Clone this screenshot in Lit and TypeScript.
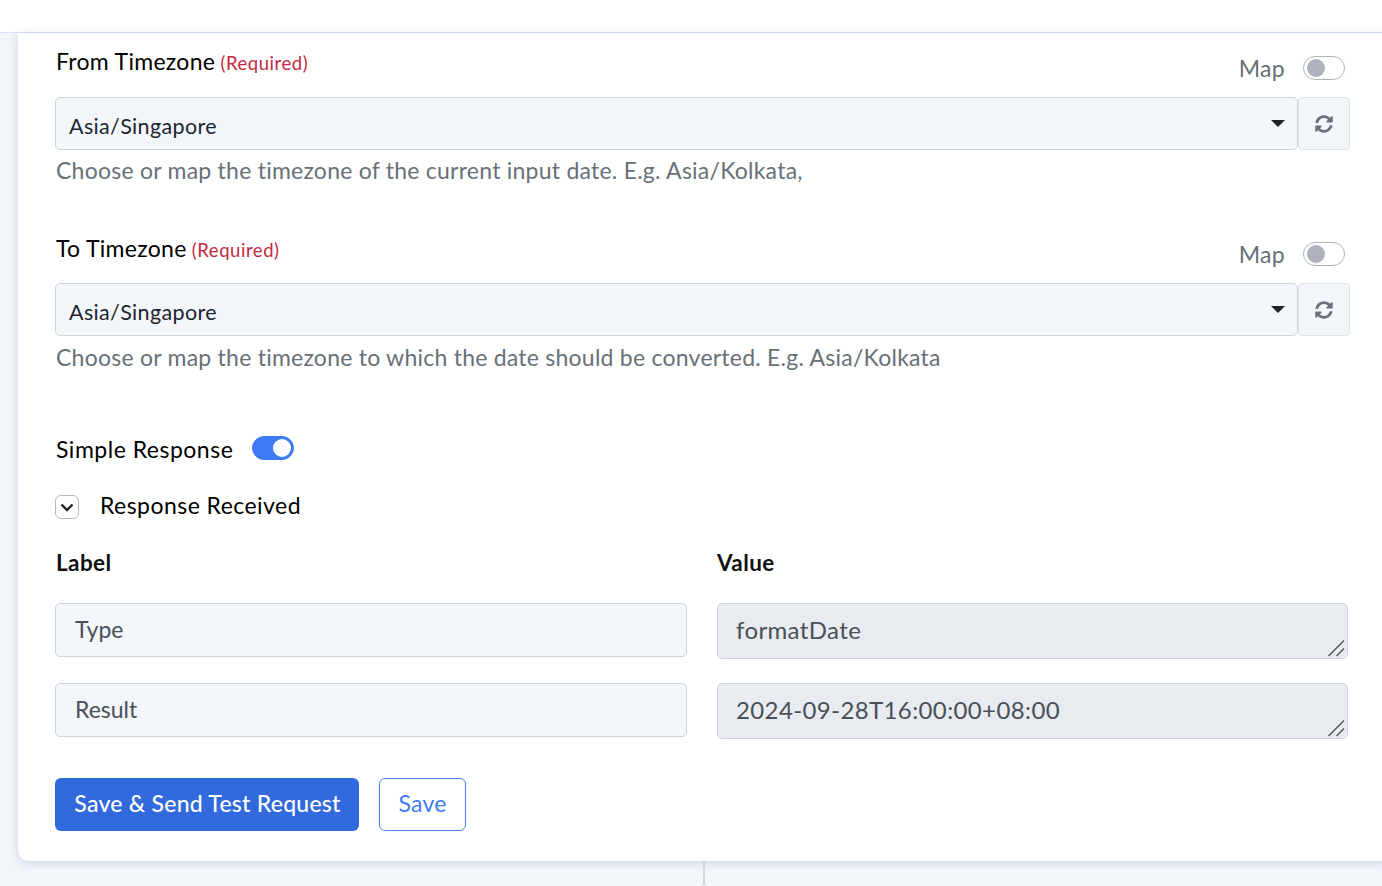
import { LitElement, html, css } from "lit";
import { customElement } from "lit/decorators.js";

const sync = html`<svg class="sync" viewBox="0 0 512 512" width="18" height="18"><path fill="currentColor" d="M370.7 133.3C339.5 104 298.9 88 255.8 88c-77.5.1-144.3 53.2-162.8 126.9-1.3 5.4-6.1 9.2-11.7 9.2H24.1c-7.5 0-13.2-6.8-11.8-14.2C33.9 94.9 134.8 8 256 8c66.4 0 126.8 26.1 171.3 68.7L463 41c15.1-15.1 41-4.4 41 17v134c0 13.3-10.7 24-24 24H346c-21.4 0-32.1-25.9-17-41l41.7-41.7zM32 296h134c21.4 0 32.1 25.9 17 41l-41.8 41.8c31.3 29.3 71.8 45.3 114.9 45.2 77.4-.1 144.3-53.1 162.8-126.8 1.3-5.4 6.1-9.2 11.7-9.2h57.3c7.5 0 13.2 6.8 11.8 14.2C478.1 417.1 377.2 504 256 504c-66.4 0-126.8-26.1-171.3-68.7L49 471c-15.1 15.1-41 4.4-41-17V320c0-13.3 10.7-24 24-24z"/></svg>`;

@customElement("app-root")
export class AppRoot extends LitElement {
  static styles = css`
    :host { display: block; height: 886px; overflow: hidden; background: #f3f6fa; font-family: Lato, "Open Sans", sans-serif; color: #000; }
    .top { height: 32px; background: #fff; border-bottom: 1px solid #d8e2fb; }
    .card { margin: 0 -12px 0 18px; height: 828px; box-sizing: border-box; padding: 0 44px 0 37px; background: #fff; border-radius: 0 0 10px 10px; box-shadow: 0 2px 10px rgba(60, 80, 140, .22); display: flex; flex-direction: column; }
    .lab-row { display: flex; justify-content: space-between; height: 64px; flex: none; }
    .lab { font-size: 23px; line-height: 28px; margin-top: 14px; padding-left: 1px; letter-spacing: .3px; }
    .req { font-size: 18.5px; color: #c3283f; margin-left: -1px; letter-spacing: .55px; }
    .map { display: flex; align-items: flex-start; gap: 18px; color: #687078; font-size: 23px; padding-top: 23px; line-height: 24px; margin-right: 5px; letter-spacing: .3px; }
    .tog { display: block; box-sizing: border-box; width: 42px; height: 24px; border-radius: 12px; border: 1px solid #aeb3bd; background: #fff; position: relative; }
    .tog::after { content: ""; position: absolute; left: 3px; top: 2px; width: 18px; height: 18px; border-radius: 50%; background: #adb2bd; }
    .tog.on { background: #3d7bf7; border-color: #3d7bf7; margin-top: -2px; }
    .tog.on::after { left: 20px; background: #fff; }
    .sel-row { display: flex; height: 53px; flex: none; }
    .sel { flex: none; width: 1243px; box-sizing: border-box; display: flex; align-items: center; justify-content: space-between; padding: 5px 12px 0 13px; background: #f3f6fa; border: 1px solid #cfd3da; border-radius: 5px; font-size: 21.5px; color: #1d2530; letter-spacing: .35px; }
    .caret { width: 0; height: 0; margin-top: -5px; border-left: 7px solid transparent; border-right: 7px solid transparent; border-top: 7px solid #1f2329; }
    .ref { flex: none; width: 52px; box-sizing: border-box; display: flex; align-items: center; justify-content: center; background: #f3f6fa; border: 1px solid #dfe3e9; border-radius: 4px; color: #687078; margin-left: 0; }
    .sync { display: block; }
    .hint { font-size: 23px; line-height: 30px; color: #687078; margin-top: 5px; padding-left: 1px; height: 30px; flex: none; white-space: nowrap; letter-spacing: .24px; }
    .field { display: flex; flex-direction: column; flex: none; height: 186px; }
    .field.second { height: 211px; }
    .field.second .lab { margin-top: 15px; }
    .field.second .hint { margin-top: 6px; }
    .simple { display: flex; align-items: center; gap: 19px; height: 34px; padding: 2px 0 0 1px; flex: none; font-size: 23px; letter-spacing: .5px; }
    .resp { display: flex; align-items: center; gap: 21px; height: 36px; margin-top: 21px; flex: none; font-size: 23px; letter-spacing: .45px; }
    .chev { box-sizing: border-box; width: 24px; height: 24px; border: 1px solid #b4b9c4; border-radius: 6px; display: flex; align-items: center; justify-content: center; margin-top: 4px; }
    .grid { display: grid; grid-template-columns: 632px 631px; column-gap: 30px; margin-top: 24px; flex: none; }
    .h { font-size: 22.5px; font-weight: 700; line-height: 32px; height: 56px; color: #111; letter-spacing: .4px; }
    .rows:first-child .h { padding-left: 1px; }
    .rows { display: flex; flex-direction: column; }
    .in { box-sizing: border-box; height: 54px; margin-top: 0; background: #f3f6fa; border: 1px solid #cfd3da; border-radius: 5px; padding: 0 19px 2px; display: flex; align-items: center; font-size: 23px; color: #495057; }
    .ta { box-sizing: border-box; height: 56px; background: #e8ebef; border: 1px solid #cfd3da; border-radius: 5px; padding: 0 18px 4px; display: flex; align-items: center; font-size: 24px; letter-spacing: .38px; color: #495057; position: relative; }
    .grip { position: absolute; right: 1px; bottom: 1px; display: block; }
    .sp26 { height: 26px; }
    .sp24 { height: 24px; }
    .btns { display: flex; gap: 20px; margin-top: 39px; flex: none; }
    .b { box-sizing: border-box; height: 53px; border-radius: 6px; display: flex; align-items: center; justify-content: center; font-size: 23px; letter-spacing: .25px; padding-bottom: 3px; }
    .pri { width: 304px; background: #3269dc; color: #fff; font-weight: 500; padding-left: 1px; }
    .sec { width: 87px; background: #fff; border: 1px solid #4a84f5; color: #3d7bf7; }
    .rule { width: 2px; height: 24px; margin-left: 703px; background: #cfd3da; }
  `;

  field(title: string, hint: string, cls: string) {
    return html`
      <div class="field ${cls}">
        <div class="lab-row">
          <div class="lab">${title} <span class="req">(Required)</span></div>
          <div class="map">Map <span class="tog"></span></div>
        </div>
        <div class="sel-row">
          <div class="sel">Asia/Singapore<span class="caret"></span></div>
          <div class="ref">${sync}</div>
        </div>
        <div class="hint">${hint}</div>
      </div>
    `;
  }

  grip() {
    return html`<svg class="grip" width="18" height="18" viewBox="0 0 18 18"><path d="M0.5 17 16 1.5M8.5 17 16 9.5" stroke="#555" stroke-width="1.5" fill="none"/></svg>`;
  }

  render() {
    return html`
      <div class="top"></div>
      <div class="card">
        ${this.field("From Timezone", "Choose or map the timezone of the current input date. E.g. Asia/Kolkata,", "")}
        ${this.field("To Timezone", "Choose or map the timezone to which the date should be converted. E.g. Asia/Kolkata", "second")}
        <div class="simple">Simple Response <span class="tog on"></span></div>
        <div class="resp">
          <span class="chev"><svg width="14" height="10" viewBox="0 0 14 10"><path d="M1.5 2.5 7 8 12.500 2.500" stroke="#1f2329" stroke-width="2.400" fill="none"/></svg></span>
          Response Received
        </div>
        <div class="grid">
          <div class="rows">
            <div class="h">Label</div>
            <div class="in">Type</div>
            <div class="sp26"></div>
            <div class="in">Result</div>
          </div>
          <div class="rows">
            <div class="h">Value</div>
            <div class="ta">formatDate${this.grip()}</div>
            <div class="sp24"></div>
            <div class="ta">2024-09-28T16:00:00+08:00${this.grip()}</div>
          </div>
        </div>
        <div class="btns">
          <div class="b pri">Save &amp; Send Test Request</div>
          <div class="b sec">Save</div>
        </div>
      </div>
      <div class="rule"></div>
    `;
  }
}
